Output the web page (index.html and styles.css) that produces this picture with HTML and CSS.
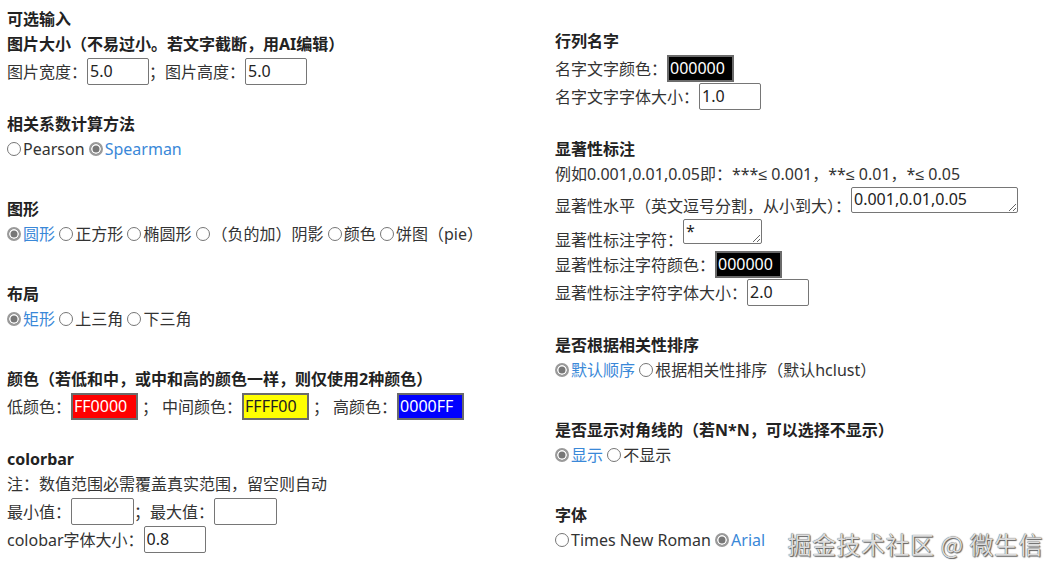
FILE: index.html
```html
<!DOCTYPE html>
<html lang="zh">
<head>
    <meta charset="UTF-8">
    <meta name="viewport" content="width=device-width, initial-scale=1.0">
    <title>相关性热图 参数</title>
    <link rel="stylesheet" href="styles.css">
</head>
<body>
    <div class="page">
        <!-- 左列 -->
        <div class="col">
            <div class="sec">
                <div class="h">可选输入</div>
                <div class="h">图片大小（不易过小。若文字截断，用AI编辑）</div>
                <div class="row"><span>图片宽度：</span><input class="num" value="5.0"><span>；图片高度：</span><input class="num" value="5.0"></div>
            </div>

            <div class="sec wide">
                <div class="h">相关系数计算方法</div>
                <div class="line">
                    <label><input type="radio" name="method">Pearson</label>
                    <label class="on"><input type="radio" name="method" checked>Spearman</label>
                </div>
            </div>

            <div class="sec wide">
                <div class="h">图形</div>
                <div class="line">
                    <label class="on"><input type="radio" name="shape" checked>圆形</label>
                    <label><input type="radio" name="shape">正方形</label>
                    <label><input type="radio" name="shape">椭圆形</label>
                    <label><input type="radio" name="shape">（负的加）阴影</label>
                    <label><input type="radio" name="shape">颜色</label>
                    <label><input type="radio" name="shape">饼图（pie）</label>
                </div>
            </div>

            <div class="sec wide">
                <div class="h">布局</div>
                <div class="line">
                    <label class="on"><input type="radio" name="layout" checked>矩形</label>
                    <label><input type="radio" name="layout">上三角</label>
                    <label><input type="radio" name="layout">下三角</label>
                </div>
            </div>

            <div class="sec">
                <div class="h">颜色（若低和中，或中和高的颜色一样，则仅使用2种颜色）</div>
                <div class="row"><span>低颜色：</span><input class="color red" value="FF0000"><span class="sep">；</span><span>中间颜色：</span><input class="color yellow" value="FFFF00"><span class="sep">；</span><span>高颜色：</span><input class="color blue" value="0000FF"></div>
            </div>

            <div class="sec">
                <div class="h">colorbar</div>
                <div class="line">注：数值范围必需覆盖真实范围，留空则自动</div>
                <div class="row"><span>最小值：</span><input class="num short"><span>；最大值：</span><input class="num short"></div>
                <div class="row"><span>colobar字体大小：</span><input class="num" value="0.8"></div>
            </div>
        </div>

        <!-- 右列 -->
        <div class="col right">
            <div class="sec">
                <div class="h">行列名字</div>
                <div class="row"><span>名字文字颜色：</span><input class="color black" value="000000"></div>
                <div class="row"><span>名字文字字体大小：</span><input class="num" value="1.0"></div>
            </div>

            <div class="sec">
                <div class="h">显著性标注</div>
                <div class="line">例如0.001,0.01,0.05即：***≤ 0.001，**≤ 0.01，*≤ 0.05</div>
                <div class="row ta"><span>显著性水平（英文逗号分割，从小到大）：</span><textarea class="levels">0.001,0.01,0.05</textarea></div>
                <div class="row ta"><span>显著性标注字符：</span><textarea class="marks">*</textarea></div>
                <div class="row"><span>显著性标注字符颜色：</span><input class="color black" value="000000"></div>
                <div class="row"><span>显著性标注字符字体大小：</span><input class="num" value="2.0"></div>
            </div>

            <div class="sec wide">
                <div class="h">是否根据相关性排序</div>
                <div class="line">
                    <label class="on"><input type="radio" name="order" checked>默认顺序</label>
                    <label><input type="radio" name="order">根据相关性排序（默认hclust）</label>
                </div>
            </div>

            <div class="sec wide">
                <div class="h">是否显示对角线的（若N*N，可以选择不显示）</div>
                <div class="line">
                    <label class="on"><input type="radio" name="diag" checked>显示</label>
                    <label><input type="radio" name="diag">不显示</label>
                </div>
            </div>

            <div class="sec">
                <div class="h">字体</div>
                <div class="line">
                    <label><input type="radio" name="font">Times New Roman</label>
                    <label class="on"><input type="radio" name="font" checked>Arial</label>
                </div>
            </div>
        </div>
    </div>

    <div class="mark">掘金技术社区 @ 微生信</div>
</body>
</html>
```

FILE: styles.css
```css
/* 基础 */
* {
    box-sizing: border-box;
}

body {
    margin: 0;
    font-family: "Noto Sans", "Liberation Sans", "Noto Sans CJK SC", sans-serif;
    font-size: 16px;
    color: #333;
    background: #fff;
    overflow: hidden;
}

/* 两列布局 */
.page {
    display: grid;
    grid-template-columns: 548px 1fr;
    padding: 7px 0 0 7px;
}

.col.right {
    padding-top: 22px;
}

/* 每一组参数 */
.sec {
    margin-bottom: 27px;
}

.sec.wide {
    margin-bottom: 35px;
}

.h {
    font-weight: bold;
    color: #222;
    line-height: 25px;
}

.line {
    line-height: 25px;
    white-space: nowrap;
}

/* 带输入框的一行 */
.row {
    display: flex;
    align-items: center;
    height: 28px;
    white-space: nowrap;
}

.row .sep {
    margin: 0 4px 0 4px;
}

.row.ta {
    height: auto;
    align-items: flex-end;
}

.row.ta span {
    line-height: 20px;
}

/* 单选 */
label {
    cursor: pointer;
}

label.on {
    color: #3a88d8;
}

input[type="radio"] {
    appearance: none;
    -webkit-appearance: none;
    margin: 0 2px 0 0;
    width: 14px;
    height: 14px;
    border: 1px solid #767676;
    border-radius: 50%;
    background: #fff;
    vertical-align: -1px;
}

input[type="radio"]:checked {
    border: 2px solid #9a9a9a;
    background: #777;
    box-shadow: inset 0 0 0 1.5px #fff;
}

/* 输入框 */
input.num,
input.color {
    font: inherit;
    font-family: "Noto Sans", sans-serif;
    height: 27px;
    width: 62px;
    padding: 0 2px;
    border: 1px solid #767676;
    border-radius: 2px;
    color: #222;
}

input.num.short {
    width: 63px;
}

input.color {
    width: 67px;
    border: 2px solid #6b6b6b;
    border-radius: 0;
    padding: 0 1px;
}

.red {
    background: #ff0000;
    color: #fff !important;
}

.yellow {
    background: #ffff00;
}

.blue {
    background: #0000ff;
    color: #fff !important;
}

.black {
    background: #000;
    color: #fff !important;
}

textarea {
    font: inherit;
    font-family: "Noto Sans", sans-serif;
    border: 1px solid #767676;
    border-radius: 2px;
    padding: 0 2px;
    color: #222;
    line-height: 22px;
    resize: both;
}

textarea.levels {
    width: 167px;
    height: 26px;
    margin-bottom: 3px;
}

textarea.marks {
    width: 79px;
    height: 25px;
    margin-top: 3px;
    margin-bottom: 6px;
}

/* 水印 */
.mark {
    position: absolute;
    right: 19px;
    bottom: 17px;
    font-family: "Noto Sans CJK SC", sans-serif;
    font-size: 24px;
    color: #dcdcdc;
    text-shadow: 0 0 1px #333, 1px 1px 1px #666;
    letter-spacing: 0.5px;
}
```
